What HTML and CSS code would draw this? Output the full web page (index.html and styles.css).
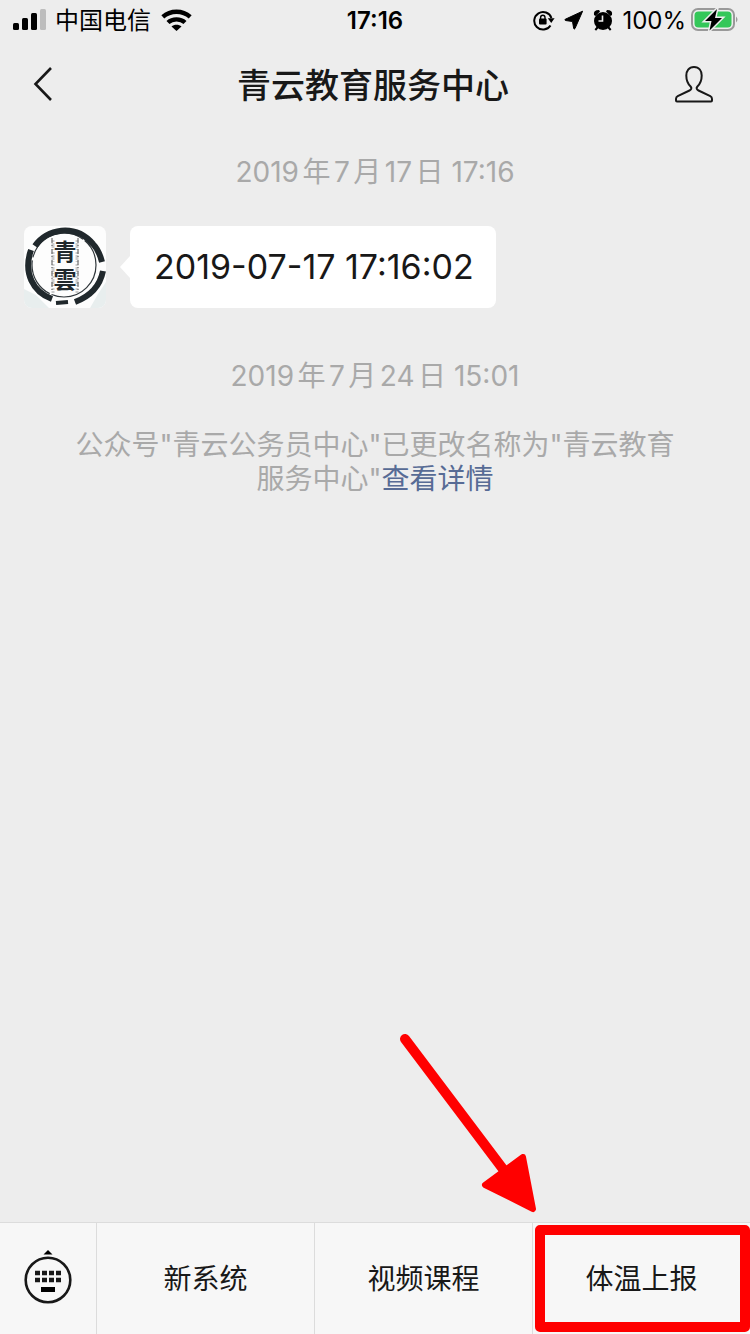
FILE: index.html
```
<!DOCTYPE html>
<html lang="zh-CN">
<head>
  <meta charset="UTF-8" />
  <meta name="viewport" content="width=device-width, initial-scale=1.0"/>
  <title>青云教育服务中心</title>
  <link rel="stylesheet" href="styles.css">
</head>
<body>
  <div class="status-bar">
    <div class="status-left">
      <svg class="signal" width="34" height="22" viewBox="0 0 34 22">
        <rect x="1" y="14" width="6" height="7" rx="1.5"/>
        <rect x="10" y="9" width="6" height="12" rx="1.5"/>
        <rect x="19" y="4" width="6" height="17" rx="1.5"/>
        <rect x="28" y="0" width="6" height="21" rx="1.5" fill="#bdbdbd"/>
      </svg>
      <span>中国电信</span>
      <svg class="wifi" width="32" height="22" viewBox="0 0 32 22">
        <path d="M2.8 7.8C10.5 1 22.5 1 30.2 7.8" fill="none" stroke="#000" stroke-width="4.4"/>
        <path d="M8 13.5C12.5 9.3 20.5 9.3 25 13.5" fill="none" stroke="#000" stroke-width="4.4"/>
        <path d="M11.5 17.5C14 15 19 15 21.5 17.5L16.5 22Z"/>
      </svg>
    </div>
    <div class="clock">17:16</div>
    <div class="status-right">
      <svg width="22" height="22" viewBox="0 0 22 22">
        <path d="M17.5 16.5A8.8 8.8 0 1 1 18.4 9" fill="none" stroke="#000" stroke-width="2"/>
        <path d="M14.8 9.3H21.6L18.2 14Z"/>
        <rect x="6" y="9.6" width="7.6" height="6" rx="1"/>
        <path d="M7.6 10V8.4a2.2 2.2 0 0 1 4.4 0V10" fill="none" stroke="#000" stroke-width="1.4"/>
      </svg>
      <svg width="20" height="20" viewBox="0 0 20 20">
        <path d="M18.6 1.2L1.2 9.3Q.4 10.2 1.5 10.5L8.5 11.5L9.7 18.5Q10.2 19.6 11 18.5Z" stroke="#000" stroke-linejoin="round"/>
      </svg>
      <svg width="20" height="22" viewBox="0 0 20 22">
        <circle cx="10" cy="12" r="9"/>
        <path d="M1 6Q0 1 6 1L7 2.500L2.500 7ZM19 6Q20 1 14 1L13 2.500L17.500 7Z"/>
        <path d="M4.500 18.500L2.300 21M15.500 18.500L17.700 21" stroke="#000" stroke-width="2"/>
        <path d="M9.500 6.500V12H5.500" fill="none" stroke="#ededed" stroke-width="1.6"/>
      </svg>
      <span>100%</span>
      <svg class="battery" width="48" height="24" viewBox="0 0 48 24">
        <rect x="1" y="1" width="42" height="21" rx="6" fill="none" stroke="#999" stroke-width="2"/>
        <path d="M45 8.5Q48 11.5 45 14.5Z" fill="#999"/>
        <rect x="3.5" y="3.5" width="37" height="16" rx="4" fill="#34c759"/>
        <path d="M26 1L14 13H20.500L18.500 22.500L31 10H24Z" stroke="#ededed" stroke-width="3" paint-order="stroke"/>
      </svg>
    </div>
  </div>

  <header class="nav-bar">
    <button class="nav-button" aria-label="返回">
      <svg width="20" height="36" viewBox="0 0 20 36">
        <path d="M19 2L3.5 18L19 34" fill="none" stroke="#181818" stroke-width="2.6"/>
      </svg>
    </button>
    <h1>青云教育服务中心</h1>
    <button class="nav-button" aria-label="公众号资料">
      <svg width="40" height="38" viewBox="0 0 40 38">
        <path d="M20 2C14.7 2 12.3 6 12.3 10.5C12.3 15.5 14 19 16.6 21.5C18 23 17.4 24.6 15.5 25.500L3.7 31.2Q2 32 2 34V35.500Q2 36.500 3 36.500H37Q38 36.500 38 35.500V34Q38 32 36.3 31.2L24.5 25.500C22.6 24.6 22 23 23.4 21.500C26 19 27.700 15.500 27.700 10.500C27.700 6 25.300 2 20 2Z" fill="none" stroke="#181818" stroke-width="2"/>
      </svg>
    </button>
  </header>

  <main class="chat">
    <time class="chat-time">2019年7月17日 17:16</time>
    <div class="message">
      <svg class="avatar" width="82" height="82" viewBox="0 0 82 82">
        <rect width="82" height="82" fill="#fdfdfd"/>
        <path d="M0 63L12 69L25 82H0ZM74 68L82 56V82H66Z" fill="#e8eeee"/>
        <path d="M29 14V67M53 14V67" stroke="#ccc" stroke-width="3" stroke-dasharray="2 1 5 1 1 2"/>
        <path d="M28 12V67M54 12V67" stroke="#555" stroke-dasharray="5 2 1 3"/>
        <circle cx="40" cy="39" r="32" fill="none" stroke="#30373b" stroke-width="1.2" stroke-dasharray="63 2 40 3"/>
        <g fill="none" stroke="#20282c" stroke-width="6">
          <path d="M11 20C22 3 51-3 69 18C73 22 76 28 78 36"/>
          <path d="M7 24C-1 47 9 66 28 73"/>
          <path d="M79 45C76 60 67 70 51 76"/>
          <path d="M32 77L44 76" stroke-width="4"/>
        </g>
        <text x="41" y="34" text-anchor="middle">青</text>
        <text x="41" y="62" text-anchor="middle">雲</text>
      </svg>
      <p class="bubble">2019-07-17 17:16:02</p>
    </div>
    <time class="chat-time">2019年7月24日 15:01</time>
    <p class="notice">公众号"青云公务员中心"已更改名称为"青云教育服务中心"<a href="#">查看详情</a></p>
  </main>

  <footer class="menu">
    <button class="keyboard" aria-label="切换键盘">
      <svg width="48" height="56" viewBox="0 0 48 56">
        <path d="M19.5 5.5L24 1L28.5 5.5Z"/>
        <circle cx="24" cy="31" r="22.3" fill="none" stroke="#181818" stroke-width="2.6"/>
        <path d="M11 24h27M11 31h27" stroke="#181818" stroke-width="4.6" stroke-dasharray="5 2"/>
        <rect x="17" y="38" width="14" height="5"/>
      </svg>
    </button>
    <button class="menu-item">新系统</button>
    <button class="menu-item">视频课程</button>
    <button class="menu-item marked">
      体温上报
      <svg class="arrow" width="140" height="184" viewBox="0 0 140 184">
        <path d="M8 7L112 145" stroke="#f00" stroke-width="10" stroke-linecap="round"/>
        <path d="M126 125L88 153L136 177Z" fill="#f00" stroke="#f00" stroke-width="6" stroke-linejoin="round"/>
      </svg>
    </button>
  </footer>
</body>
</html>
```
FILE: styles.css
```
* {
  box-sizing: border-box;
}

body {
  margin: 0;
  min-height: 100vh;
  display: flex;
  flex-direction: column;
  background: #ededed;
  color: #181818;
  font-family: Inter, "Noto Sans CJK SC", sans-serif;
  font-size: 28px;
}

button {
  margin: 0;
  padding: 0;
  border: none;
  background: none;
  color: inherit;
  font: inherit;
  cursor: pointer;
}

svg {
  display: block;
  flex: none;
}

.status-bar {
  display: grid;
  grid-template-columns: 1fr auto 1fr;
  align-items: center;
  height: 40px;
  padding: 0 12px;
  color: #000;
  font-size: 24px;
  line-height: 36px;
}

.status-bar span,
.clock {
  padding-top: 2px;
}

.status-left,
.status-right {
  display: flex;
  align-items: center;
  gap: 9px;
}

.status-right {
  justify-content: flex-end;
}

.clock {
  font-weight: 600;
}

.battery {
  margin: 0 -1px 0 -4px;
}

.nav-bar {
  display: flex;
  align-items: center;
  justify-content: space-between;
  height: 88px;
  padding: 0 36px 0 32px;
}

.nav-button {
  display: flex;
  width: 40px;
}

.nav-bar h1 {
  margin: 0;
  padding-top: 4px;
  font-size: 34px;
  font-weight: 500;
  line-height: 48px;
}

.chat {
  flex: 1;
  padding: 24px;
}

.chat-time {
  display: block;
  color: #a9a9a9;
  line-height: 40px;
  text-align: center;
  text-autospace: normal;
}

.message {
  display: flex;
  gap: 24px;
  margin: 34px 0 48px;
}

.avatar {
  border-radius: 8px;
}

.avatar text {
  fill: #20282c;
  font-family: "Noto Sans CJK TC", sans-serif;
  font-size: 23px;
  font-weight: 700;
}

.bubble {
  position: relative;
  margin: 0;
  padding: 0 22px 0 24px;
  border-radius: 8px;
  background: #fff;
  font-size: 34px;
  line-height: 82px;
}

/* little tail pointing at the avatar */
.bubble::before {
  content: "";
  position: absolute;
  top: 30px;
  left: -10px;
  border: 11px solid transparent;
  border-right: 10px solid #fff;
  border-left: 0;
}

.notice {
  margin: 32px 44px 0;
  color: #a9a9a9;
  line-height: 34px;
  text-align: center;
}

.notice a {
  color: #576b95;
  text-decoration: none;
}

.menu {
  display: flex;
  height: 112px;
  border-top: 1px solid #dcdcdc;
  background: #f7f7f7;
}

.keyboard,
.menu-item {
  padding-bottom: 3px;
}

.keyboard {
  display: flex;
  align-items: center;
  justify-content: center;
  width: 96px;
}

.menu-item {
  flex: 1;
  border-left: 1px solid #dcdcdc;
}

.marked {
  position: relative;
}

.marked::after {
  content: "";
  position: absolute;
  inset: 2px 0 2px 2px;
  border: 10px solid #f00;
  border-radius: 5px;
}

.arrow {
  position: absolute;
  right: 213px;
  bottom: 118px;
}
```
